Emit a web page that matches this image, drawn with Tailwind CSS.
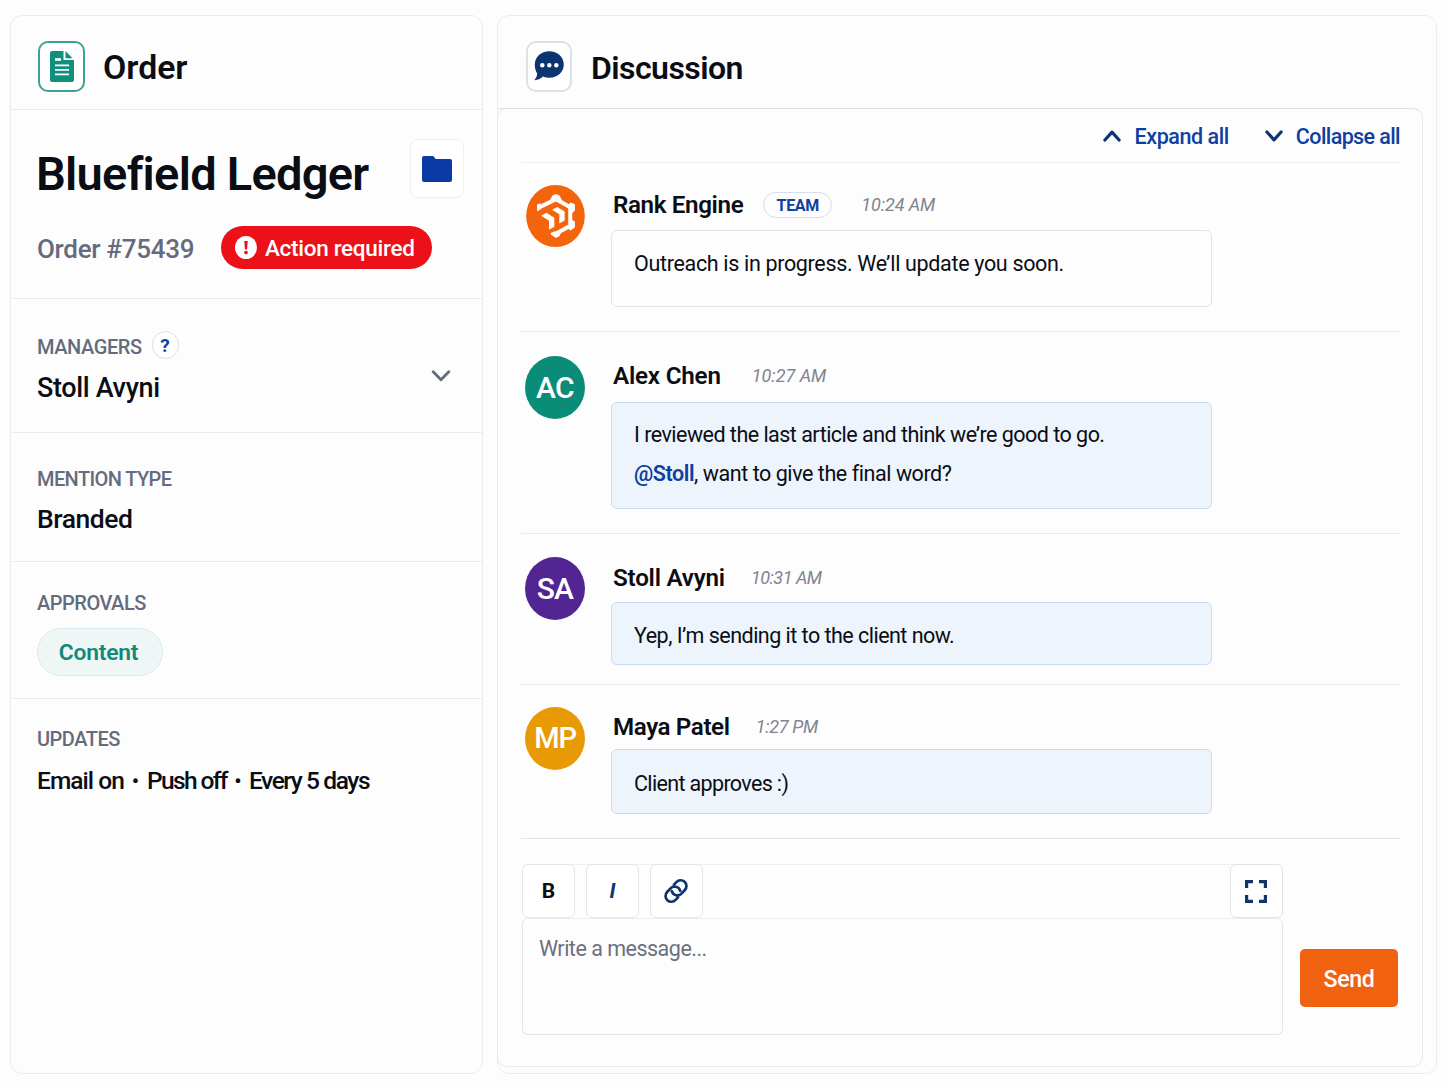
<!DOCTYPE html>
<html lang="en">
<head>
  <meta charset="UTF-8" />
  <meta name="viewport" content="width=device-width, initial-scale=1.0"/>
  <title>Order #75439 | Bluefield Ledger</title>
  <script src="https://cdn.jsdelivr.net/npm/@tailwindcss/browser@4"></script>
  <style>
    body { font-family: Roboto, 'Liberation Sans', sans-serif; }
  </style>
</head>
<body class="h-[1086px] overflow-hidden bg-[#fdfdfe] text-[#0b0d14]">
  <div class="flex gap-3.5 pl-2.5 pt-[15px] whitespace-nowrap">

    <!-- Order panel -->
    <aside class="w-[473px] h-[1059px] shrink-0 rounded-xl border border-[#e9edf1]">
      <header class="flex items-center gap-[18px] h-[94px] pt-2 pl-[27px] border-b border-[#e6ebee]">
        <div class="flex items-center justify-center w-[47px] h-[51px] rounded-[10px] border-2 border-[#3ba393] bg-white">
          <svg class="w-6 h-[31px]" viewBox="0 0 24 31" fill="none">
            <path d="M2 0h11.5v9H24v20a2 2 0 0 1-2 2H2a2 2 0 0 1-2-2V2a2 2 0 0 1 2-2z" fill="#10907c"/>
            <path d="M15.5 0L22.5 7.3H15.5z" fill="#10907c"/>
            <path d="M5 8.5h6" stroke="#fff" stroke-width="2.6"/>
            <path d="M5 14.3h14M5 18.8h14M5 23.3h14" stroke="#fff" stroke-width="1.7"/>
          </svg>
        </div>
        <h2 class="mt-[3px] text-[33.8px] leading-10 font-semibold">Order</h2>
      </header>

      <section class="h-[189px] pl-[25px] pr-[18px] border-b border-[#e9ecf1]">
        <div class="flex justify-between pt-[29px]">
          <h1 class="mt-[5px] text-[47px] leading-[60px] font-semibold tracking-[-0.73px]">Bluefield Ledger</h1>
          <button class="flex items-center justify-center w-[54px] h-[59px] rounded-lg border border-[#edeff3] bg-white">
            <svg class="w-[30px] h-[26px]" viewBox="0 0 30 26" fill="#0b3aa4">
              <path d="M2 0h8.5a2 2 0 0 1 1.6.8L13.5 3H28a2 2 0 0 1 2 2v19a2 2 0 0 1-2 2H2a2 2 0 0 1-2-2V2a2 2 0 0 1 2-2z"/>
            </svg>
          </button>
        </div>
        <div class="flex items-center mt-[22px]">
          <span class="w-[184px] ml-px mt-[3px] text-[26px] leading-8 font-medium tracking-[-0.29px] text-[#646b7c]">Order #75439</span>
          <span class="flex items-center w-[211px] h-[43px] pl-3.5 gap-2 rounded-full bg-[#ec1118] text-white">
            <svg class="w-[22px] h-[23px]" viewBox="0 0 22 23">
              <ellipse cx="11" cy="11.5" rx="11" ry="11.5" fill="#fff"/>
              <path d="M9.3 5h3.4l-.6 8.4H9.9z" fill="#ec1118"/>
              <circle cx="11" cy="16.6" r="1.8" fill="#ec1118"/>
            </svg>
            <span class="text-[22.5px] leading-7 font-medium tracking-[-0.3px]">Action required</span>
          </span>
        </div>
      </section>

      <section class="flex justify-between h-[134px] pl-[26px] pr-8 border-b border-[#e9ecf1]">
        <div class="pt-8">
          <div class="flex items-center h-7 gap-2.5">
            <span class="mt-1 text-[20px] leading-7 font-medium tracking-[-0.43px] text-[#646b7c]">MANAGERS</span>
            <span class="flex items-center justify-center w-[27px] h-7 pt-0.5 rounded-full border border-[#cfe0f3] bg-white text-[19px] font-bold text-[#0b3fae]">?</span>
          </div>
          <p class="mt-[13px] text-[27px] leading-8 font-medium tracking-[-0.35px]">Stoll Avyni</p>
        </div>
        <svg class="w-5 h-3 mt-[71px] -mr-px" viewBox="0 0 20 12" fill="none" stroke="#646b7c" stroke-width="2.8" stroke-linecap="round" stroke-linejoin="round">
          <path d="M2.2 1.8l7.8 8 7.8-8"/>
        </svg>
      </section>

      <section class="h-[129px] pl-[26px] pt-8 border-b border-[#e9ecf1]">
        <p class="text-[20px] leading-7 font-medium tracking-[-0.6px] text-[#646b7c]">MENTION TYPE</p>
        <p class="mt-2.5 text-[26.5px] leading-8 font-medium tracking-[-0.45px]">Branded</p>
      </section>

      <section class="h-[137px] pl-[26px] pt-[27px] border-b border-[#e9ecf1]">
        <p class="text-[20px] leading-7 font-medium tracking-[-0.5px] text-[#646b7c]">APPROVALS</p>
        <span class="flex items-center justify-center w-[126px] h-12 mt-[11px] pr-[3px] pt-0.5 rounded-full border border-[#d8eae9] bg-[#eef6f6] text-[22.8px] font-semibold tracking-[-0.2px] text-[#10897a]">Content</span>
      </section>

      <section class="pl-[26px] pt-[26px]">
        <p class="text-[20px] leading-7 font-medium tracking-[-0.5px] text-[#646b7c]">UPDATES</p>
        <p class="flex items-center mt-3 text-[24.5px] leading-8 font-medium">
          <span class="tracking-[-0.95px]">Email on</span>
          <span class="w-[23px] text-center text-[21px]">•</span>
          <span class="tracking-[-1.6px]">Push off</span>
          <span class="w-[22px] text-center text-[21px]">•</span>
          <span class="tracking-[-1.4px]">Every 5 days</span>
        </p>
      </section>
    </aside>

    <!-- Discussion panel -->
    <main class="w-[940px] h-[1059px] shrink-0 rounded-xl border border-[#e9edf1]">
      <header class="flex items-center gap-[19px] w-[900px] h-[93px] pt-2 pl-7 border-b border-[#dfe4ea]">
        <div class="flex items-center justify-center w-[46px] h-[51px] rounded-[10px] border-2 border-[#dbe1e8] bg-white">
          <svg class="w-[30px] h-[30px]" viewBox="0 0 30 30">
            <path d="M15.3.3C23.5.3 29.8 6 29.8 13.5S23.5 26.8 15.3 26.8c-2.300 0-4.400-.4-6.300-1.200C6.500 28 3.500 29.300.2 29.200c1.800-1.900 2.800-4.200 3-6.800C1.500 19.900.8 17 .8 13.500.8 6 7.100.3 15.300.3z" fill="#0c3570"/>
            <circle cx="8.3" cy="14.2" r="2.2" fill="#fff"/>
            <circle cx="15.3" cy="14.2" r="2.2" fill="#fff"/>
            <circle cx="22.3" cy="14.2" r="2.2" fill="#fff"/>
          </svg>
        </div>
        <h2 class="mt-[3px] text-[32px] leading-10 font-semibold tracking-[-0.55px]">Discussion</h2>
      </header>

      <div class="w-[926px] h-[959px] -ml-px -mt-px pl-[23px] pr-[22px] rounded-[10px] border border-[#e6eaef] border-t-[#dce1e8]">
        <div class="flex items-center justify-end h-[54px] border-b border-[#eceff3] text-[21.5px] leading-7 font-medium text-[#0d409f]">
          <svg class="w-[18px] h-3 mr-[14px]" viewBox="0 0 18 12" fill="none" stroke="#0c3672" stroke-width="3.2" stroke-linecap="round" stroke-linejoin="round">
            <path d="M1.9 10L9 2.2 16.1 10"/>
          </svg>
          <button class="mr-9 mt-0.5 tracking-[-0.43px]">Expand all</button>
          <svg class="w-[18px] h-3 mr-[13px]" viewBox="0 0 18 12" fill="none" stroke="#0c3672" stroke-width="3.2" stroke-linecap="round" stroke-linejoin="round">
            <path d="M1.9 2L9 9.8 16.1 2"/>
          </svg>
          <button class="mt-0.5 tracking-[-0.6px]">Collapse all</button>
        </div>

        <!-- Messages -->
        <article class="flex h-[169px] pl-[5px] border-b border-[#e8ebef]">
          <svg class="w-[59px] h-[62px] mt-[22px] mr-[26px] shrink-0" viewBox="108 555 177 187">
            <ellipse cx="196.500" cy="648.500" rx="88.500" ry="93.500" fill="#f4640d"/>
            <path d="M144 624L198 598l43 24v56l-49 27" fill="none" stroke="#fff" stroke-width="12"/>
            <path d="M141 614l10-4v20l-10 4zM180 602l7-15 11-5 11 5 7 15zM234 616l8-8 13 5v19l-13 12zM234 686l8-28 13 7v18l-13 9zM182 700l10-5 22 2-5 12-11 6-15-10z" fill="#fff"/>
            <path d="M153 648l16-9 24 15v27l-16 9v-27zM186 630l16-9 22 14v27l-16 9v-28z" fill="#fff"/>
          </svg>
          <div class="pt-7">
            <div class="flex items-center h-7">
              <span class="pl-0.5 text-[24.2px] font-semibold tracking-[-0.37px]">Rank Engine</span>
              <span class="flex items-center justify-center w-[69px] h-[26px] ml-5 pt-0.5 rounded-full border border-[#d3dfee] text-[16px] font-bold tracking-[-0.3px] text-[#0d409f]">TEAM</span>
              <time class="ml-[29px] -mt-px text-[18px] italic tracking-[-0.1px] text-[#80858f]">10:24 AM</time>
            </div>
            <div class="w-[601px] h-[77px] mt-[11px] pl-[22px] pt-[19px] rounded-md border border-[#dfe4ec] text-[21.5px] leading-7 tracking-[-0.33px]">Outreach is in progress. We’ll update you soon.</div>
          </div>
        </article>

        <article class="flex h-[202px] pl-1 border-b border-[#e8ebef]">
          <div class="flex items-center justify-center w-[60px] h-[63px] mt-6 mr-[26px] shrink-0 rounded-[50%] bg-[#0b8c78] text-[30px] font-medium tracking-[-0.6px] text-white">AC</div>
          <div class="pt-[30px]">
            <div class="flex items-center h-7">
              <span class="pl-0.5 text-[24.2px] font-semibold tracking-[-0.2px]">Alex Chen</span>
              <time class="ml-[31px] -mt-0.5 text-[18px] italic text-[#80858f]">10:27 AM</time>
            </div>
            <div class="w-[601px] h-[107px] mt-3 pl-[22px] pt-[13px] rounded-md border border-[#c5dcf2] bg-[#edf4fc] text-[21.5px] leading-[38.5px]">
              <p class="tracking-[-0.52px]">I reviewed the last article and think we’re good to go.</p>
              <p class="tracking-[-0.44px]"><span class="font-semibold text-[#0d409f]">@Stoll</span>, want to give the final word?</p>
            </div>
          </div>
        </article>

        <article class="flex h-[151px] pl-1 border-b border-[#e8ebef]">
          <div class="flex items-center justify-center w-[60px] h-[63px] mt-[23px] mr-[26px] shrink-0 rounded-[50%] bg-[#522593] text-[30px] font-medium tracking-[-0.9px] text-white">SA</div>
          <div class="pt-[30px]">
            <div class="flex items-center h-7">
              <span class="pl-0.5 text-[24.2px] font-semibold tracking-[-0.22px]">Stoll Avyni</span>
              <time class="ml-[26px] -mt-0.5 text-[18px] italic tracking-[-0.5px] text-[#80858f]">10:31 AM</time>
            </div>
            <div class="w-[601px] h-[63px] mt-[10px] pl-[22px] pt-[19px] rounded-md border border-[#c5dcf2] bg-[#edf4fc] text-[21.5px] leading-7 tracking-[-0.52px]">Yep, I’m sending it to the client now.</div>
          </div>
        </article>

        <article class="flex h-[154px] pl-1 border-b border-[#e1e4e9]">
          <div class="flex items-center justify-center w-[60px] h-[63px] mt-[22px] mr-[26px] shrink-0 rounded-[50%] bg-[#e89a05] text-[29px] font-medium tracking-[-1.2px] text-white">MP</div>
          <div class="pt-7">
            <div class="flex items-center h-7">
              <span class="pl-0.5 text-[24.2px] font-semibold tracking-[-0.4px]">Maya Patel</span>
              <time class="ml-[26px] -mt-0.5 text-[18px] italic tracking-[-0.3px] text-[#80858f]">1:27 PM</time>
            </div>
            <div class="w-[601px] h-[65px] mt-2 pl-[22px] pt-5 rounded-md border border-[#c5dcf2] bg-[#edf4fc] text-[21.5px] leading-7 tracking-[-0.65px]">Client approves :)</div>
          </div>
        </article>

        <!-- Composer -->
        <div class="flex items-end gap-[17px] pt-[25px] pl-px">
          <div class="w-[761px] h-[171px]">
            <div class="flex h-[54px] gap-[11px] rounded-md border-t border-[#eceff3]">
              <button class="w-[53px] h-[54px] -mt-px pt-0.5 rounded-md border border-[#e2e6ec] bg-white text-[21px] font-bold">B</button>
              <button class="w-[53px] h-[54px] -mt-px pt-0.5 rounded-md border border-[#e2e6ec] bg-white text-[21px] font-bold italic text-[#0c3570]">I</button>
              <button class="flex items-center justify-center w-[53px] h-[54px] -mt-px rounded-md border border-[#e2e6ec] bg-white">
                <svg class="w-[26px] h-[26px] mr-px" viewBox="0 0 26 26" fill="none" stroke="#0c3570" stroke-width="2.7" stroke-linecap="round" stroke-linejoin="round">
                  <g transform="translate(13 13) rotate(-47)">
                    <path d="M-3.2 5.8H-6.800A5.800 5.800 0 0 1-6.800-5.800H-1.800A5.800 5.800 0 0 1 3 3"/>
                    <path d="M3.2-5.8H6.800A5.800 5.800 0 0 1 6.800 5.800H1.800A5.800 5.800 0 0 1-3-3"/>
                  </g>
                </svg>
              </button>
              <button class="flex items-center justify-center w-[53px] h-[54px] -mt-px ml-auto rounded-md border border-[#dfe4ec] bg-white">
                <svg class="w-[22px] h-[23px] mr-px" viewBox="0 0 22 23" fill="none" stroke="#12366b" stroke-width="3.2">
                  <path d="M1.6 8V1.6H8M14 1.6h6.400V8M20.400 15v6.400H14M8 21.400H1.600V15"/>
                </svg>
              </button>
            </div>
            <div class="h-[117px] pl-4 pt-4 rounded-md border border-[#e0e6ea] border-t-[#eceff3] text-[21.5px] leading-7 tracking-[-0.5px] text-[#6b7080]">Write a message...</div>
          </div>
          <button class="w-[98px] h-[58px] mb-7 pt-0.5 rounded-[5px] bg-[#f16210] text-[23.2px] font-medium tracking-[-0.35px] text-white">Send</button>
        </div>
      </div>
    </main>
  </div>
</body>
</html>
